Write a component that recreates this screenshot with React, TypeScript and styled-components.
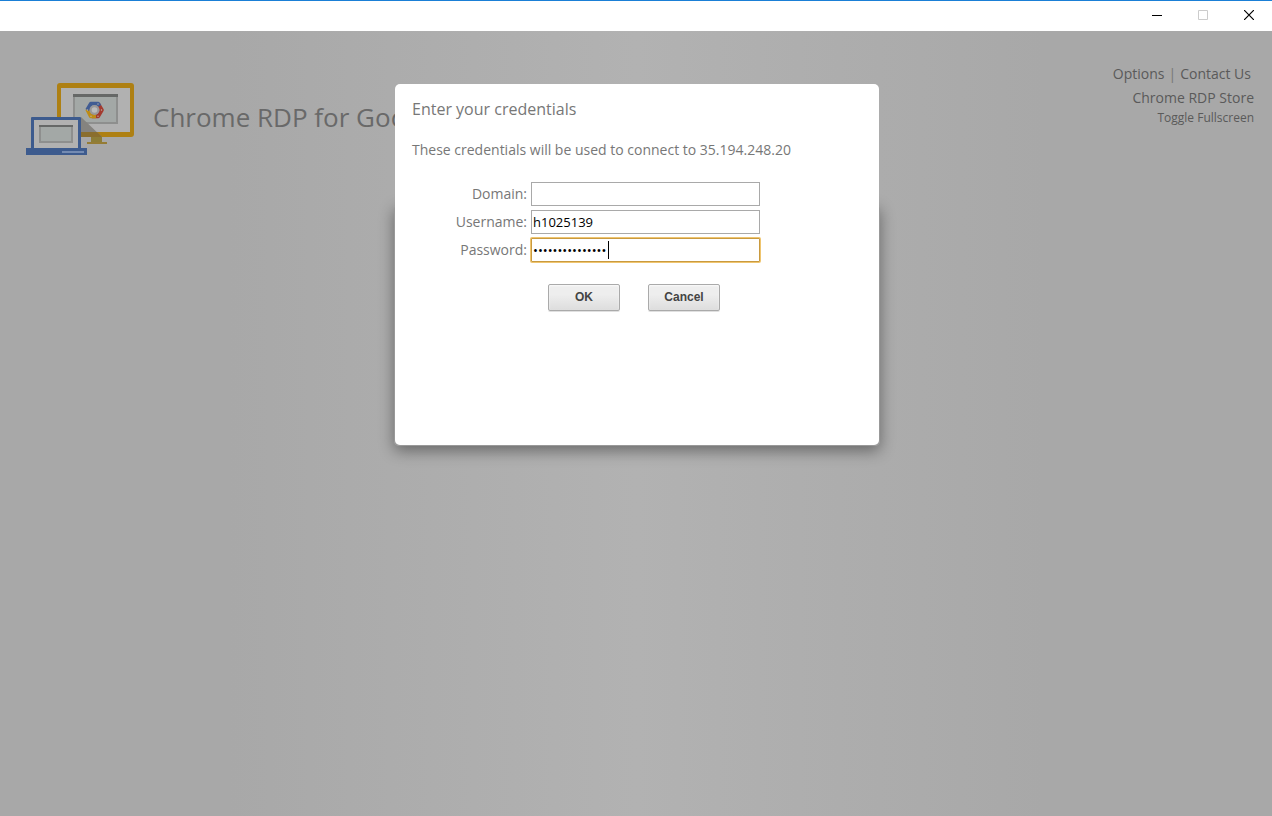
import React from "react";
import styled, { createGlobalStyle } from "styled-components";

const GlobalStyle = createGlobalStyle`
  *, *::before, *::after { box-sizing: border-box; }
  body {
    margin: 0;
    font-family: "Open Sans", "Noto Sans", sans-serif;
    font-size: 14px;
    line-height: 20px;
    color: #666;
  }
`;

const Window = styled.div`
  display: flex;
  flex-direction: column;
  min-height: 100vh;
`;

const TitleBar = styled.div`
  display: flex;
  justify-content: flex-end;
  height: 31px;
  flex: none;
  padding-bottom: 2px;
  border-top: 1px solid #1a7fd6;
  background: #fff;
`;

const WindowButton = styled.button`
  display: flex;
  align-items: center;
  justify-content: center;
  width: 46px;
  padding: 0;
  border: 0;
  background: none;
  color: #000;

  &:disabled {
    color: #ccc;
  }
`;

const Page = styled.div`
  position: relative;
  flex: 1;
  background: linear-gradient(to right, #a8a8a8 18%, #b2b2b2 50%, #a8a8a8 82%);
`;

const Header = styled.header`
  display: flex;
  justify-content: space-between;
  padding: 32px 18px 0 25px;
`;

const Brand = styled.div`
  display: flex;
  align-items: flex-start;
  gap: 18px;
  padding-top: 19px;
`;

const Logo = styled.svg`
  display: block;
  width: 110px;
  height: 74px;
  flex: none;
`;

const AppTitle = styled.h1`
  margin: 17px 0 0;
  max-width: calc(50vw - 390px);
  overflow: hidden;
  white-space: nowrap;
  font-size: 26px;
  line-height: 36px;
  font-weight: 400;
  color: #696969;
`;

const Links = styled.nav`
  display: flex;
  flex-direction: column;
  align-items: flex-end;
  line-height: 22px;
`;

const LinkRow = styled.div`
  display: flex;
  gap: 4px;
  padding-right: 3px;
  margin-bottom: 2px;
`;

const Divider = styled.span`
  color: #777;
`;

const NavLink = styled.a<{ $small?: boolean }>`
  color: #5a5a5a;
  text-decoration: none;
  font-size: ${(p) => (p.$small ? 12 : 14)}px;
  line-height: ${(p) => (p.$small ? 18 : 22)}px;
`;

const Overlay = styled.div`
  position: absolute;
  inset: 0;
  display: grid;
  justify-content: center;
  align-content: start;
  padding: 53px 0 0 2px;
`;

const BackPanel = styled.div`
  grid-area: 1 / 1;
  margin-top: 120px;
  width: 486px;
  border: 1px solid #999;
  border-radius: 5px;
  box-shadow: 0 5px 15px rgba(0, 0, 0, 0.4);
`;

const Dialog = styled.form`
  grid-area: 1 / 1;
  justify-self: center;
  position: relative;
  width: 484px;
  min-height: 361px;
  margin-bottom: 1px;
  padding: 15px 17px;
  border-radius: 5px;
  background: #fff;
  color: #777;
`;

const DialogTitle = styled.h2`
  margin: 0;
  font-size: 16px;
  line-height: 20px;
  font-weight: 400;
`;

const Message = styled.p`
  margin: 21px 0 22px;
`;

const Fields = styled.div`
  display: grid;
  grid-template-columns: 115px 229px;
  column-gap: 4px;
  row-gap: 4px;
`;

const Label = styled.label`
  text-align: right;
  line-height: 24px;
`;

const InputWrap = styled.div`
  position: relative;
  height: 24px;
`;

const Input = styled.input<{ $active?: boolean }>`
  display: block;
  width: 100%;
  height: 24px;
  padding: 1px;
  border: 1px solid ${(p) => (p.$active ? "#c99a3f" : "#a9a9a9")};
  border-radius: ${(p) => (p.$active ? 1 : 0)}px;
  outline: none;
  box-shadow: ${(p) => (p.$active ? "0 0 0 1px #efc56f" : "none")};
  background: #fff;
  color: #000;
  font-family: inherit;
  font-size: 13px;
`;

const Caret = styled.span`
  position: absolute;
  left: 77px;
  top: 3px;
  width: 1px;
  height: 18px;
  background: #000;
`;

const Actions = styled.div`
  display: flex;
  gap: 28px;
  margin: 22px 0 0 136px;
`;

const Button = styled.button`
  width: 72px;
  height: 27px;
  padding: 0 0 2px;
  border: 1px solid #aaa;
  border-radius: 2px;
  background: linear-gradient(#eee 38%, #ddd);
  box-shadow: 0 1px 0 rgba(0, 0, 0, 0.12), inset 0 1px 2px rgba(255, 255, 255, 0.75);
  color: #444;
  font: bold 12px "Liberation Sans", Arial, sans-serif;
`;

function BrandLogo() {
  return (
    <Logo viewBox="0 0 110 74" aria-hidden="true">
      <rect x="32" y="1" width="77" height="54" rx="3" fill="#ae8013" />
      <rect x="36" y="6" width="69" height="44" fill="#b1b1b1" />
      <rect x="66" y="55" width="11" height="6" fill="#8d7d37" />
      <rect x="62" y="60" width="20" height="2" fill="#957c35" />
      <rect x="48" y="12" width="45" height="30" fill="#8e8f8e" />
      <rect x="50" y="15" width="41" height="25" fill="#a3a8a6" />
      <rect x="48" y="12" width="45" height="3" fill="#666867" />
      <g fill="none" strokeWidth="4" strokeLinejoin="round">
        <path d="M67 34.300 H73.100 L76.800 28 L73.100 21.700" stroke="#a33a2e" />
        <path d="M62.200 27 L65.900 34.300 H71" stroke="#bd8c16" />
        <path d="M62.200 28 L65.900 21.700 H73.100 L74.500 24" stroke="#405c93" />
      </g>
      <g fill="#b9b2a8">
        <circle cx="62.500" cy="28" r="0.700" />
        <circle cx="66" cy="34.300" r="0.700" />
        <circle cx="73" cy="34.300" r="0.700" />
        <circle cx="76.500" cy="28" r="0.700" />
        <circle cx="73" cy="22" r="0.700" />
      </g>
      <circle cx="69.500" cy="28" r="5" fill="#999" />
      <circle cx="69.500" cy="28" r="2.800" fill="#bbb" />
      <path d="M56 35 L77 55 H56 Z" fill="#85837f" />
      <path d="M72 50 L77 55 H56 V50 Z" fill="#8a6e2e" />
      <rect x="6" y="35" width="50" height="33" rx="1" fill="#3d5b8e" />
      <rect x="9" y="38" width="44" height="28" fill="#b1b1b1" />
      <rect x="14" y="43" width="34" height="18" fill="#8e8f8e" />
      <rect x="16" y="45" width="30" height="14" fill="#a3a8a6" />
      <rect x="14" y="43" width="34" height="2" fill="#666867" />
      <rect x="1" y="66" width="61" height="7" fill="#3d5b8e" />
      <rect x="37" y="69" width="22" height="2" fill="#748bb2" />
    </Logo>
  );
}

export default function App() {
  return (
    <Window>
      <GlobalStyle />
      <TitleBar>
        <WindowButton type="button" aria-label="Minimize">
          <svg width="10" height="10" viewBox="0 0 10 10" shapeRendering="crispEdges">
            <path d="M0 5h10v1H0z" fill="currentColor" />
          </svg>
        </WindowButton>
        <WindowButton type="button" aria-label="Maximize" disabled>
          <svg width="10" height="10" viewBox="0 0 10 10">
            <path d="M.5 .5h9v9h-9z" fill="none" stroke="currentColor" />
          </svg>
        </WindowButton>
        <WindowButton type="button" aria-label="Close">
          <svg width="10" height="10" viewBox="0 0 10 10">
            <path d="M0 0l10 10M10 0L0 10" fill="none" stroke="currentColor" strokeWidth="1.200" />
          </svg>
        </WindowButton>
      </TitleBar>
      <Page>
        <Header>
          <Brand>
            <BrandLogo />
            <AppTitle>Chrome RDP for Goo</AppTitle>
          </Brand>
          <Links>
            <LinkRow>
              <NavLink href="#options">Options</NavLink>
              <Divider>|</Divider>
              <NavLink href="#contact">Contact Us</NavLink>
            </LinkRow>
            <NavLink href="#store">Chrome RDP Store</NavLink>
            <NavLink href="#fullscreen" $small>
              Toggle Fullscreen
            </NavLink>
          </Links>
        </Header>
        <Overlay>
          <BackPanel />
          <Dialog role="dialog" aria-labelledby="dialog-title" onSubmit={(e) => e.preventDefault()}>
            <DialogTitle id="dialog-title">Enter your credentials</DialogTitle>
            <Message>These credentials will be used to connect to 35.194.248.20</Message>
            <Fields>
              <Label htmlFor="domain">Domain:</Label>
              <InputWrap>
                <Input id="domain" type="text" />
              </InputWrap>
              <Label htmlFor="username">Username:</Label>
              <InputWrap>
                <Input id="username" type="text" defaultValue="h1025139" />
              </InputWrap>
              <Label htmlFor="password">Password:</Label>
              <InputWrap>
                <Input id="password" type="password" defaultValue="aaaaaaaaaaaaaaa" $active />
                <Caret />
              </InputWrap>
            </Fields>
            <Actions>
              <Button type="submit">OK</Button>
              <Button type="button">Cancel</Button>
            </Actions>
          </Dialog>
        </Overlay>
      </Page>
    </Window>
  );
}
